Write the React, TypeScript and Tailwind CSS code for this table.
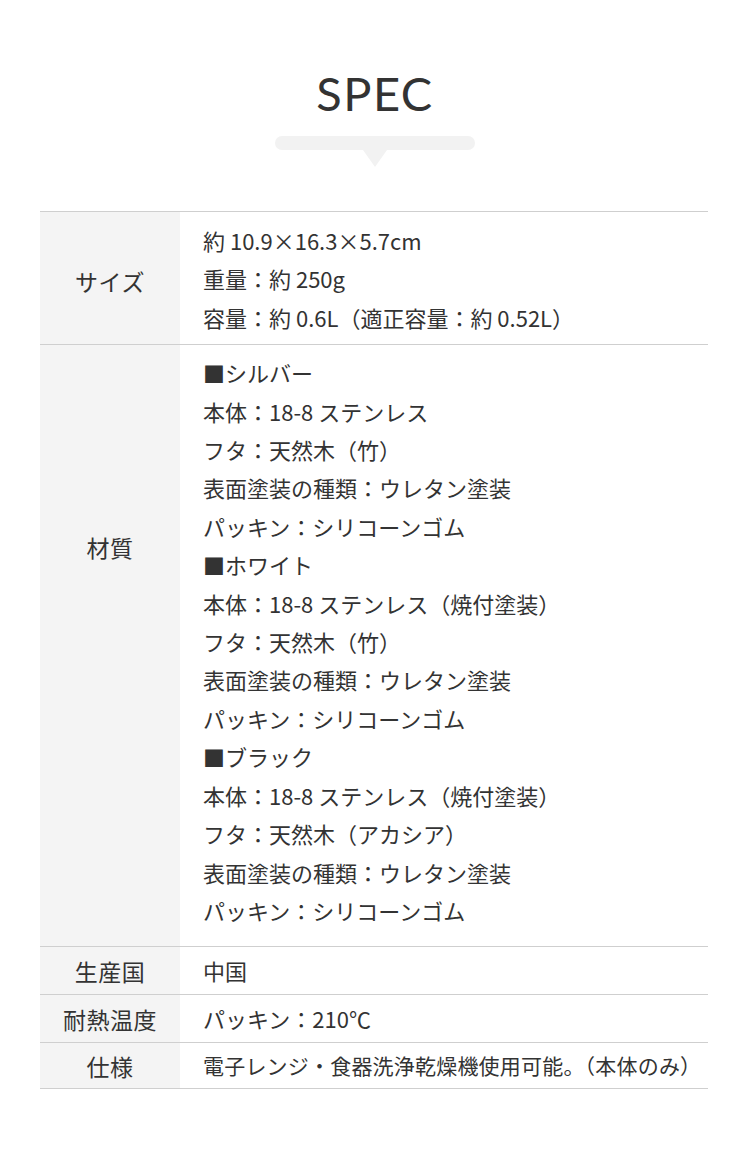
import React from 'react';

const font = {
  fontFamily: '"Noto Sans CJK JP", "Noto Sans", sans-serif',
};

const materials = [
  '■シルバー',
  '本体：18-8 ステンレス',
  'フタ：天然木（竹）',
  '表面塗装の種類：ウレタン塗装',
  'パッキン：シリコーンゴム',
  '■ホワイト',
  '本体：18-8 ステンレス（焼付塗装）',
  'フタ：天然木（竹）',
  '表面塗装の種類：ウレタン塗装',
  'パッキン：シリコーンゴム',
  '■ブラック',
  '本体：18-8 ステンレス（焼付塗装）',
  'フタ：天然木（アカシア）',
  '表面塗装の種類：ウレタン塗装',
  'パッキン：シリコーンゴム',
];

function Lines({ items }: { items: string[] }) {
  return (
    <>
      {items.map((line, i) => (
        <p key={i} className="leading-[38.4px]">
          {line}
        </p>
      ))}
    </>
  );
}

const label =
  'flex w-[140px] shrink-0 justify-center bg-[#f4f4f4] text-[23px] tracking-[0.5px]';

export default function App() {
  return (
    <div
      className="min-h-[1157px] w-[750px] bg-white pt-[64px] text-[22px] text-[#333]"
      style={font}
    >
      {/* heading */}
      <div className="flex flex-col items-center">
        <h2
          className="text-[47px] leading-[58px] tracking-[1.5px] text-[#333]"
          style={{ fontFamily: 'Lato, "Noto Sans", sans-serif' }}
        >
          SPEC
        </h2>
        <div className="mt-[14px] h-[14px] w-[200px] rounded-full bg-[#f2f2f2]" />
        <div className="h-0 w-0 border-x-[12px] border-t-[17px] border-x-transparent border-t-[#f2f2f2]" />
      </div>

      {/* table */}
      <div className="ml-[40px] mt-[44px] w-[668px] border-t border-[#cfcfcf]">
        <div className="flex border-b border-[#cfcfcf]">
          <div className={`${label} items-center pt-[6px]`}>サイズ</div>
          <div className="flex-1 pb-[8px] pl-[23px] pt-[9px]">
            <Lines
              items={[
                '約 10.9×16.3×5.7cm',
                '重量：約 250g',
                '容量：約 0.6L（適正容量：約 0.52L）',
              ]}
            />
          </div>
        </div>

        <div className="flex border-b border-[#cfcfcf]">
          <div className={`${label} pt-[183px]`}>
            <span className="leading-[38.4px]">材質</span>
          </div>
          <div className="flex-1 pb-[17px] pl-[23px] pt-[8px]">
            <Lines items={materials} />
          </div>
        </div>

        <div className="flex h-[48px] border-b border-[#cfcfcf]">
          <div className={`${label} items-center`}>生産国</div>
          <div className="flex flex-1 items-center pl-[23px]">中国</div>
        </div>

        <div className="flex h-[48px] border-b border-[#cfcfcf]">
          <div className={`${label} items-center`}>耐熱温度</div>
          <div className="flex flex-1 items-center pl-[23px]">
            パッキン：210℃
          </div>
        </div>

        <div className="flex h-[46px] border-b border-[#cfcfcf]">
          <div className={`${label} items-center`}>仕様</div>
          <div className="flex flex-1 items-center whitespace-nowrap pl-[23px] text-[21px] tracking-[0.2px]">
            電子レンジ・食器洗浄乾燥機使用可能。（本体のみ）
          </div>
        </div>
      </div>
    </div>
  );
}
